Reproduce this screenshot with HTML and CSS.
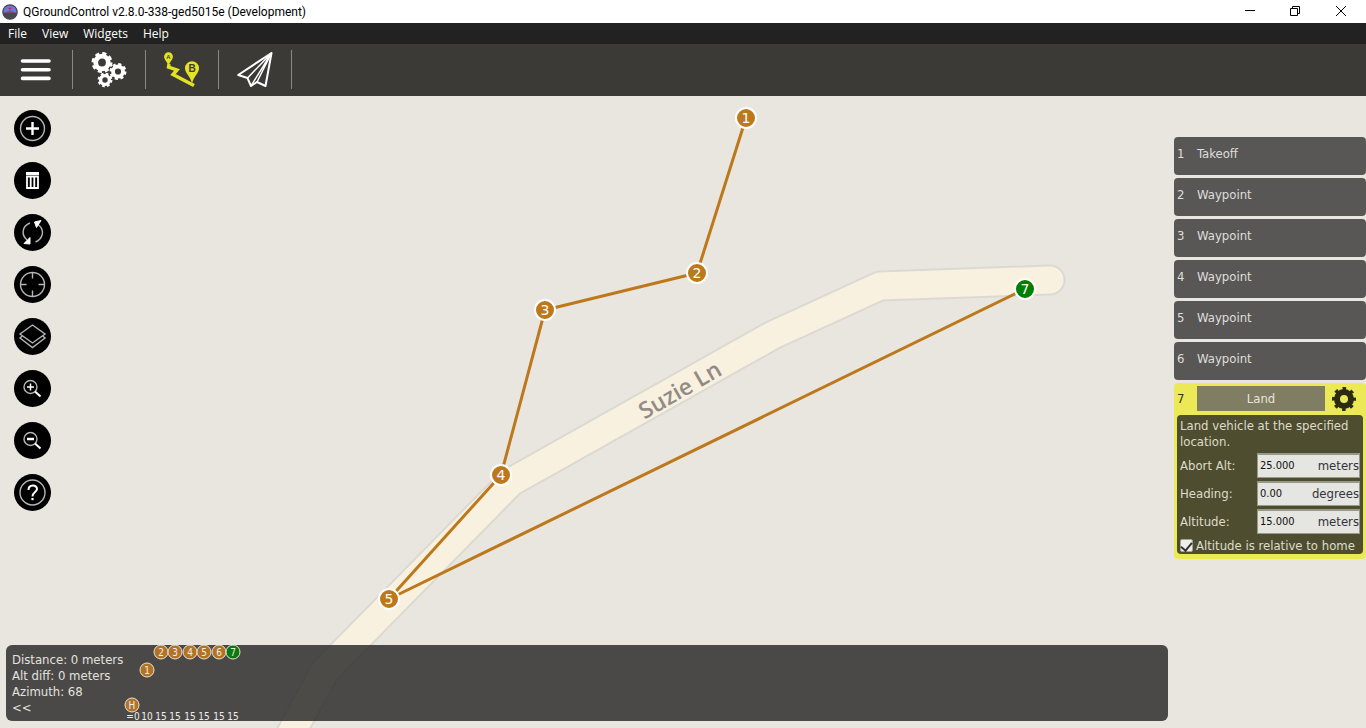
FILE: index.html
```html
<!DOCTYPE html>
<html lang="en">
<head>
<meta charset="utf-8">
<title>QGroundControl v2.8.0-338-ged5015e (Development)</title>
<link rel="stylesheet" href="styles.css">
</head>
<body>
<header class="titlebar">
  <svg class="app-icon" width="16" height="16" viewBox="0 0 16 16" aria-hidden="true">
    <circle cx="8" cy="8" r="7.3" fill="#4a4a4c"/>
    <path d="M1 8a7 7 0 0 1 14 0v.8H1z" fill="#6c78dc"/>
    <path d="M2 8.8l4-1.4h4l4 1.4z" fill="#8a3c60"/>
    <path d="M7.5 3h1v5h-1zM6.5 4h3v1h-3z" fill="#c22f56"/>
    <circle cx="8" cy="8" r="7.2" fill="none" stroke="#4b4658" stroke-width="1.2"/>
  </svg>
  <h1 class="title">QGroundControl v2.8.0-338-ged5015e (Development)</h1>
  <div class="window-buttons">
    <button class="window-button" aria-label="Minimize"><svg width="12" height="12" viewBox="0 0 12 12"><path d="M2 4.500h10" stroke="#000"/></svg></button>
    <button class="window-button" aria-label="Restore"><svg width="12" height="12" viewBox="0 0 12 12" fill="none" stroke="#000"><path d="M1.500 2.500h7v7h-7zM3.500 2.500v-2h7v7h-2"/></svg></button>
    <button class="window-button" aria-label="Close"><svg width="12" height="12" viewBox="0 0 12 12"><path d="M1 0l10 10M11 0L1 10" stroke="#000"/></svg></button>
  </div>
</header>
<nav class="menubar">
  <button class="menu">File</button><button class="menu">View</button><button class="menu">Widgets</button><button class="menu">Help</button>
</nav>
<nav class="toolbar" aria-label="Main toolbar">
  <button class="tool" aria-label="Menu">
    <svg width="36" height="36" viewBox="0 0 36 36" stroke="#fff" stroke-width="3.600" stroke-linecap="round"><path d="M4.500 9h26.500M4.500 17.700h26.500M4.500 26.400h26.500"/></svg>
  </button>
  <button class="tool" aria-label="Setup">
    <svg width="36" height="36" viewBox="0 0 36 36" fill="none" stroke="#fff">
      <circle cx="11" cy="10.500" r="6.300" stroke-width="4.800"/><circle cx="11" cy="10.500" r="9" stroke-width="3" stroke-dasharray="4.070 3"/>
      <circle cx="27" cy="19.500" r="5" stroke-width="3.800"/><circle cx="27" cy="19.500" r="7.200" stroke-width="2.600" stroke-dasharray="3.150 2.500"/>
      <circle cx="14" cy="28" r="4.400" stroke-width="3.400"/><circle cx="14" cy="28" r="6.200" stroke-width="2.400" stroke-dasharray="2.670 2.200"/>
    </svg>
  </button>
  <button class="tool" aria-label="Plan">
    <svg width="36" height="36" viewBox="0 0 36 36">
      <path d="M5 12L4.500 15L13 18L9 22.500L30 33.500" fill="none" stroke="#e3e325" stroke-width="3.400"/>
      <path d="M4.500 13.500C3 9.500 .1 7.500.1 4.700a4.400 4.400 0 0 1 8.800 0C8.900 7.500 6 9.500 4.500 13.500z" fill="#e3e325"/>
      <path d="M28 31.500C26 24 21 21 21 16.300a7 7 0 0 1 14 0C35 21 30 24 28 31.500z" fill="#e3e325"/>
      <text class="pin-a" x="4.500" y="7">A</text><text class="pin-b" x="28" y="20">B</text>
    </svg>
  </button>
  <button class="tool" aria-label="Fly">
    <svg width="36" height="36" viewBox="0 0 36 36" fill="none" stroke="#fff" stroke-width="2" stroke-linejoin="round"><path d="M34.500 1L1.200 23L10.500 26L14 34L20 30L28.500 34z"/><path d="M34.500 1L10.500 26M34.500 1L14 34M34.500 1L20 30" stroke-width="1.500"/></svg>
  </button>
</nav>
<main class="map">
  <svg class="map-canvas" viewBox="0 96 1366 632" preserveAspectRatio="xMinYMin slice" aria-label="Mission map">
    <g fill="none" stroke-linejoin="round" stroke-linecap="round">
      <path class="road-edge" d="M1050 280L880 286L773 335L511 482L325 671L270 772"/>
      <path class="road" d="M1050 280L880 286L773 335L511 482L325 671L270 772"/>
      <path class="route" d="M746 118L697 273L545 310L501 475L389 599L1025 289"/>
    </g>
    <text class="road-name" transform="translate(684 397) rotate(-30)">Suzie Ln</text>
    <g class="marker"><circle cx="746" cy="118" r="10"/><text x="746" y="123">1</text></g>
    <g class="marker"><circle cx="697" cy="273" r="10"/><text x="697" y="278">2</text></g>
    <g class="marker"><circle cx="545" cy="310" r="10"/><text x="545" y="315">3</text></g>
    <g class="marker"><circle cx="501" cy="475" r="10"/><text x="501" y="480">4</text></g>
    <g class="marker"><circle cx="389" cy="599" r="10"/><text x="389" y="604">5</text></g>
    <g class="marker current"><circle cx="1025" cy="289" r="10"/><text x="1025" y="294">7</text></g>
  </svg>
  <div class="overlay">
    <div class="left">
      <div class="map-tools">
        <button class="round" aria-label="Add waypoint"><svg viewBox="0 0 37 37"><circle cx="18.500" cy="18.500" r="12"/><path class="bright" d="M18.500 12v13M12 18.500h13" stroke-width="2.400"/></svg></button>
        <button class="round" aria-label="Delete"><svg viewBox="0 0 37 37"><path class="bright" d="M12 11.500h13" stroke-width="3"/><path class="bright" d="M13 14.500h11v11.500h-11z" stroke-width="1.800"/><path class="bright" d="M16.700 14v12M20.300 14v12" stroke-width="1.800"/></svg></button>
        <button class="round" aria-label="Sync"><svg viewBox="0 0 37 37"><path d="M16 9C8 12 7 21 13 26M21.500 28C29 25 31 16 24.500 11"/><path class="bright" d="M20.500 8l6.500-1.500-4.500 7zM16 23.500v6.500l-6-.5z" fill="#fff" stroke-width="1"/></svg></button>
        <button class="round" aria-label="Center map"><svg viewBox="0 0 37 37"><circle cx="18.500" cy="18.500" r="12"/><path d="M18.500 6.500v6M18.500 24.500v6M6.500 18.500h6M24.500 18.500h6"/></svg></button>
        <button class="round" aria-label="Map layers"><svg viewBox="0 0 37 37"><path d="M18.500 7L31 16L18.500 25L6 16zM8.500 17.800L6 20L18.500 29.500L31 20L28.500 17.800"/></svg></button>
        <button class="round" aria-label="Zoom in"><svg viewBox="0 0 37 37"><circle cx="16.500" cy="17" r="6.500"/><path class="bright" d="M13 17h7M16.500 13.500v7" stroke-width="1.500"/><path class="bright" d="M21 21.500l5.500 5" stroke-width="2"/></svg></button>
        <button class="round" aria-label="Zoom out"><svg viewBox="0 0 37 37"><circle cx="16.500" cy="17" r="6.500"/><path class="bright" d="M13 17h7" stroke-width="2.500"/><path class="bright" d="M21 21.500l5.500 5" stroke-width="2"/></svg></button>
        <button class="round" aria-label="Help"><svg viewBox="0 0 37 37"><circle cx="18.500" cy="18.500" r="12.500"/><path class="bright" d="M14.500 16c0-6 8.500-5.500 8.500-1 0 3-4.500 3.200-4.500 7.500" stroke-width="2"/><path class="bright" d="M18.500 24v2.200" stroke-width="2.200"/></svg></button>
      </div>
      <section class="status">
        <div class="status-text">
          <p>Distance: 0 meters</p><p>Alt diff: 0 meters</p><p>Azimuth: 68</p>
          <button class="collapse" aria-label="Collapse">&lt;&lt;</button>
        </div>
        <svg class="profile" width="120" height="76" viewBox="0 0 120 76" aria-label="Altitude profile">
          <g><circle cx="11" cy="60" r="7"/><text x="11" y="64">H</text></g>
          <g><circle cx="26" cy="25" r="7"/><text x="26" y="29">1</text></g>
          <g><circle cx="40" cy="7" r="7"/><text x="40" y="11">2</text></g>
          <g><circle cx="54" cy="7" r="7"/><text x="54" y="11">3</text></g>
          <g><circle cx="69" cy="7" r="7"/><text x="69" y="11">4</text></g>
          <g><circle cx="83" cy="7" r="7"/><text x="83" y="11">5</text></g>
          <g><circle cx="98" cy="7" r="7"/><text x="98" y="11">6</text></g>
          <g class="current"><circle cx="112" cy="7" r="7"/><text x="112" y="11">7</text></g>
          <g class="heights"><text x="12" y="75">=0</text><text x="26" y="75">10</text><text x="40" y="75">15</text><text x="54" y="75">15</text><text x="69" y="75">15</text><text x="83" y="75">15</text><text x="98" y="75">15</text><text x="112" y="75">15</text></g>
        </svg>
      </section>
    </div>
    <aside class="mission">
      <button class="item"><span class="number">1</span>Takeoff</button>
      <button class="item"><span class="number">2</span>Waypoint</button>
      <button class="item"><span class="number">3</span>Waypoint</button>
      <button class="item"><span class="number">4</span>Waypoint</button>
      <button class="item"><span class="number">5</span>Waypoint</button>
      <button class="item"><span class="number">6</span>Waypoint</button>
      <section class="editor">
        <div class="editor-head">
          <span class="number">7</span>
          <button class="command">Land</button>
          <button class="gear" aria-label="Item settings"><svg width="24" height="24" viewBox="0 0 24 24" fill="none" stroke="#2b2b12"><circle cx="12" cy="12" r="7" stroke-width="6"/><circle cx="12" cy="12" r="10.500" stroke-width="3" stroke-dasharray="3.600 4.647" stroke-dashoffset="1.800"/></svg></button>
        </div>
        <form class="editor-body">
          <p class="description">Land vehicle at the specified location.</p>
          <div class="row"><label for="abort">Abort Alt:</label><div class="field"><input id="abort" type="text" value="25.000"><span>meters</span></div></div>
          <div class="row"><label for="heading">Heading:</label><div class="field"><input id="heading" type="text" value="0.00"><span>degrees</span></div></div>
          <div class="row"><label for="altitude">Altitude:</label><div class="field"><input id="altitude" type="text" value="15.000"><span>meters</span></div></div>
          <label class="relative"><input type="checkbox" checked>Altitude is relative to home</label>
        </form>
      </section>
    </aside>
  </div>
</main>
</body>
</html>
```
FILE: styles.css
```css
* { box-sizing: border-box; }
body {
  margin: 0;
  min-height: 100vh;
  display: flex;
  flex-direction: column;
  font: 13px/16px "DejaVu Sans Condensed", "Noto Sans", sans-serif;
}
button {
  margin: 0;
  padding: 0;
  border: 0;
  background: none;
  color: inherit;
  font: inherit;
}
p { margin: 0; }
svg { display: block; }

.titlebar {
  display: flex;
  align-items: center;
  height: 23px;
  padding-left: 2px;
  gap: 5px;
  background: #fff;
  color: #000;
}
.title {
  flex: 1;
  margin: 0;
  font: 12px/16px Roboto, sans-serif;
}
.window-buttons { display: flex; padding-right: 2px; }
.window-button {
  display: grid;
  place-items: center;
  width: 46px;
  height: 20px;
}

.menubar {
  display: flex;
  align-items: center;
  gap: 15px;
  height: 21px;
  padding-left: 8px;
  background: #222;
  color: #fff;
  font: 12px/16px "Open Sans", sans-serif;
}
.toolbar {
  display: flex;
  align-items: center;
  height: 52px;
  padding-bottom: 1px;
  background: #3c3a37;
}
.tool {
  display: grid;
  place-items: center;
  width: 73px;
  height: 39px;
  border-right: 1px solid #898886;
}
.pin-a, .pin-b {
  fill: #3c3a37;
  font-family: "Liberation Sans", sans-serif;
  font-weight: bold;
  text-anchor: middle;
}
.pin-a { font-size: 6px; }
.pin-b { font-size: 10px; }

.map {
  position: relative;
  flex: 1;
  display: flex;
  overflow: hidden;
  background: #e9e6df;
}
.map-canvas {
  position: absolute;
  inset: 0;
  width: 100%;
  height: 100%;
}
.road-edge { stroke: #dcd9d3; stroke-width: 31px; }
.road { stroke: #f8f1e0; stroke-width: 27px; }
.route { stroke: #be781c; stroke-width: 3px; }
.road-name {
  fill: #918a85;
  font: 600 23px "Open Sans", sans-serif;
  text-anchor: middle;
}
.marker circle { fill: #be781c; stroke: #fff; stroke-width: 2px; }
.marker text {
  fill: #fff;
  font: 14px "DejaVu Sans", sans-serif;
  text-anchor: middle;
}
.marker.current circle { fill: #008000; }

.overlay {
  position: relative;
  flex: 1;
  display: flex;
  gap: 6px;
}
.left {
  flex: 1;
  display: flex;
  flex-direction: column;
  justify-content: space-between;
  padding: 14px 0 7px 6px;
}
.map-tools {
  display: flex;
  flex-direction: column;
  gap: 15px;
  padding-left: 8px;
}
.round {
  width: 37px;
  height: 37px;
  border-radius: 50%;
  background: #000;
}
.round svg { fill: none; stroke: #b5b5b5; stroke-width: 1.4px; }
.bright { stroke: #fff; }

.status {
  display: flex;
  height: 76px;
  border-radius: 6px;
  background: rgba(34, 34, 34, 0.8);
  color: #e2e2df;
}
.status-text {
  width: 115px;
  padding: 7px 0 0 6px;
  white-space: nowrap;
}
.profile circle { fill: #b37324; stroke: #e8e2d8; stroke-width: 1px; }
.profile .current circle { fill: #0b7a0b; }
.profile text {
  fill: #eee;
  font: 10px "DejaVu Sans Condensed", sans-serif;
  text-anchor: middle;
}

.mission {
  display: flex;
  flex-direction: column;
  gap: 3px;
  width: 192px;
  padding-top: 41px;
}
.item {
  display: flex;
  height: 38px;
  padding: 9px 3px;
  border-radius: 4px;
  background: #595755;
  color: #dfdedb;
}
.number { width: 20px; text-align: left; }
.editor {
  padding: 3px 3px 5px;
  border-radius: 4px;
  background: #ece957;
}
.editor-head {
  display: flex;
  align-items: center;
  color: #33330f;
}
.command {
  flex: 1;
  height: 25px;
  padding-top: 1px;
  background: #7f7d62;
  color: #e6e5da;
}
.gear { padding: 0 7px; }
.editor-body {
  display: flex;
  flex-direction: column;
  gap: 3px;
  margin-top: 4px;
  padding: 3px 3px 0;
  border-radius: 4px;
  background: #4e4d2f;
  color: #dedccb;
}
.row { display: flex; align-items: center; }
.row label { width: 77px; }
.field {
  flex: 1;
  display: flex;
  align-items: center;
  min-width: 0;
  height: 25px;
  border: 1px solid #999989;
  border-top-width: 2px;
  background: #e5e5e1;
  color: #33333b;
}
.field input {
  flex: 1;
  width: 0;
  min-width: 0;
  padding: 0 2px;
  border: 0;
  background: none;
  color: #111;
  font: 11px/16px "DejaVu Sans Condensed", sans-serif;
}
.relative {
  display: flex;
  align-items: center;
  gap: 3px;
  height: 17px;
  white-space: nowrap;
}
.relative input {
  appearance: none;
  display: grid;
  place-items: center;
  width: 13px;
  height: 13px;
  margin: 0;
  border: 1px solid #a5a594;
  border-radius: 2px;
  background: #eeeeea;
}
.relative input:checked::before {
  content: "";
  width: 5px;
  height: 9px;
  border: solid #333;
  border-width: 0 2px 2px 0;
  transform: rotate(40deg);
}
```
